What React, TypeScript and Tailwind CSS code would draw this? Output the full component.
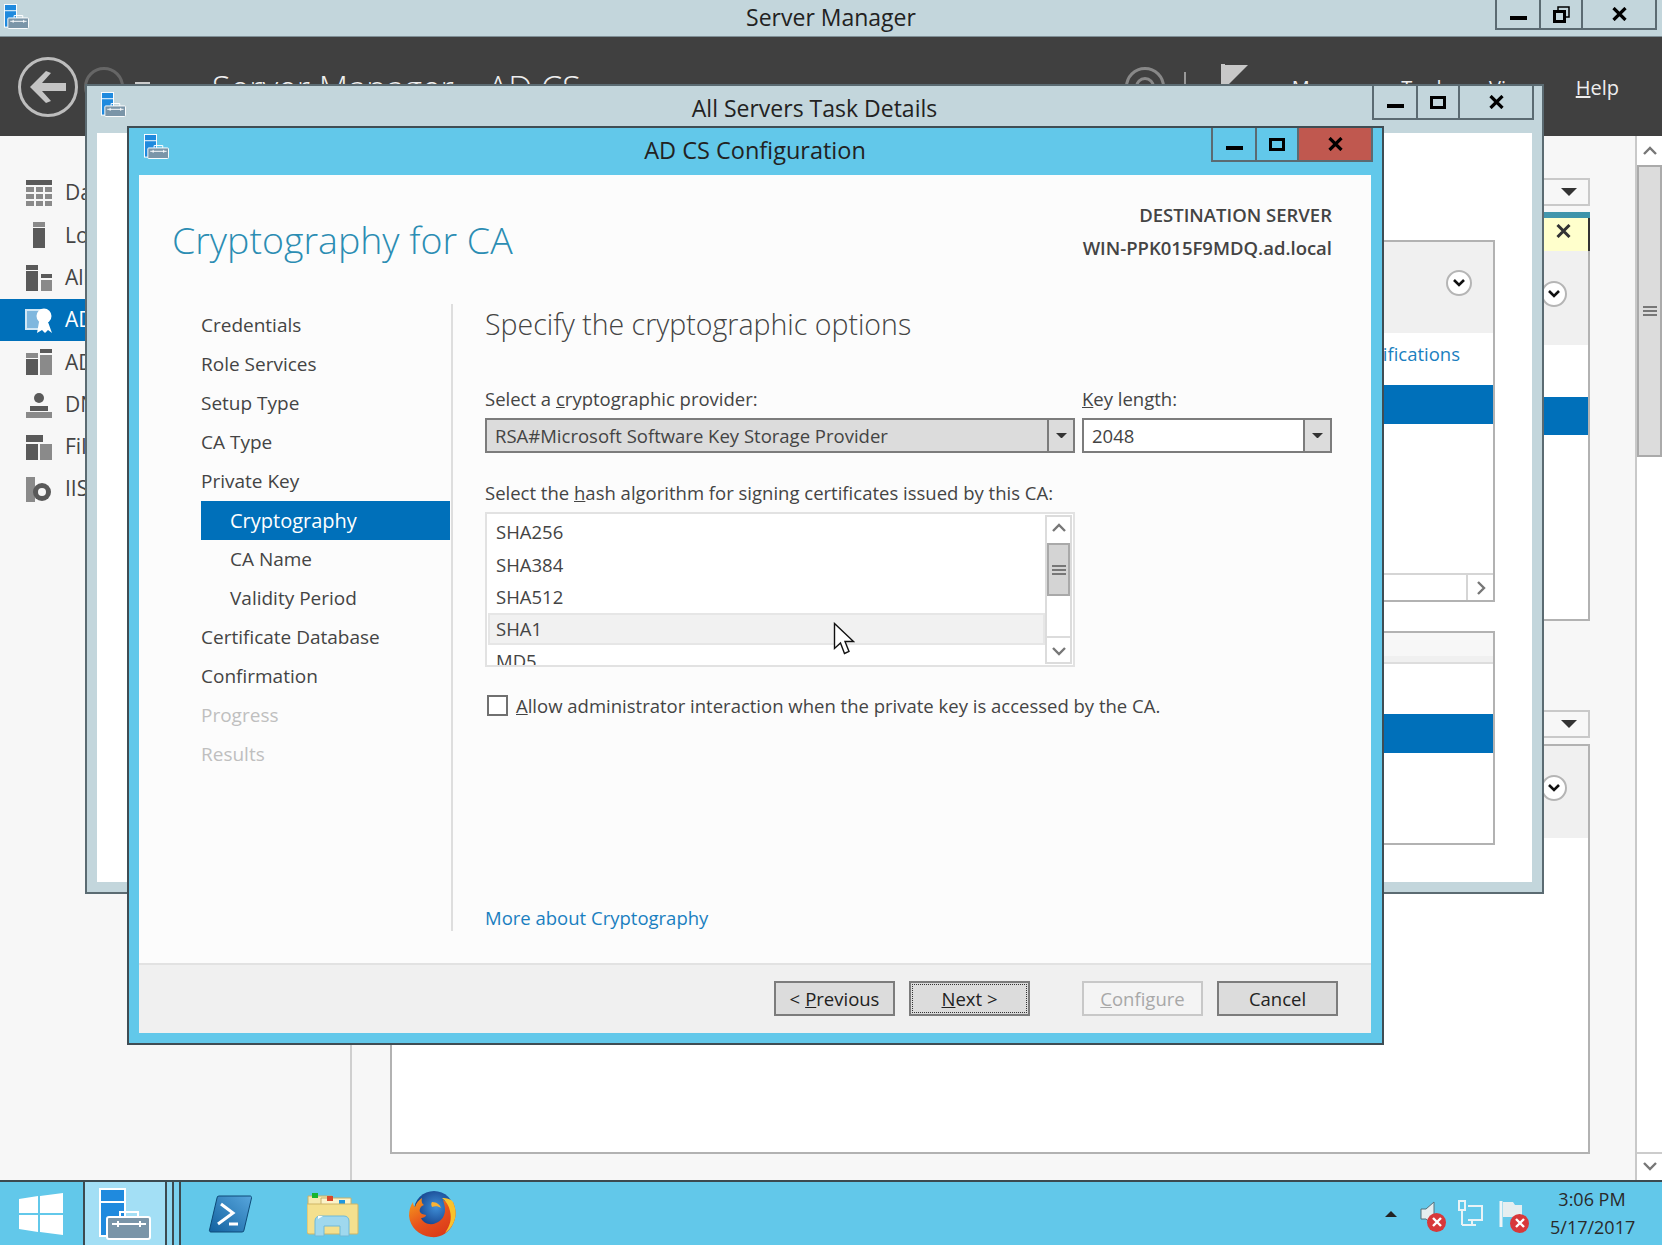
const steps = [
  { label: 'Credentials' },
  { label: 'Role Services' },
  { label: 'Setup Type' },
  { label: 'CA Type' },
  { label: 'Private Key' },
  { label: 'Cryptography', sub: true, active: true },
  { label: 'CA Name', sub: true },
  { label: 'Validity Period', sub: true },
  { label: 'Certificate Database' },
  { label: 'Confirmation' },
  { label: 'Progress', off: true },
  { label: 'Results', off: true },
]

const navLabels = ['Dashboard', 'Local Server', 'All Servers', 'AD CS', 'AD DS', 'DNS', 'File and Storage', 'IIS']

const ToolIcon = ({ size }: { size: number }) => (
  <svg width={size} height={size} viewBox="0 0 52 52">
    <rect x="0" y="0" width="27" height="49" fill="#fff" />
    <rect x="2" y="2" width="23" height="11" fill="#1f8ade" />
    <rect x="2" y="15" width="23" height="32" fill="#1f8ade" />
    <path d="M21 29v-5h18v5" fill="none" stroke="#fff" strokeWidth="2" />
    <rect x="8" y="29" width="43" height="22" rx="2" fill="#7a95a8" stroke="#fff" strokeWidth="2" />
    <path d="M13 36h34M19 33v6M41 33v6" stroke="#fff" strokeWidth="2" />
  </svg>
)

const MinGlyph = () => <span className="mt-[8px] block h-[4px] w-[17px] bg-black" />

const MaxGlyph = () => <span className="block h-[13px] w-[16px] border-[3px] border-black" />

const RestoreGlyph = () => (
  <svg width="17" height="17" viewBox="0 0 17 17" fill="none" stroke="#000">
    <path d="M5 4V1h11v10h-3" strokeWidth="1.5" />
    <rect x="1.5" y="5.5" width="10" height="10" strokeWidth="3" />
  </svg>
)

const CloseGlyph = () => (
  <svg width="15" height="14" viewBox="0 0 15 14">
    <path d="M1.5 1L13.5 13M13.5 1L1.5 13" stroke="#000" strokeWidth="3.2" />
  </svg>
)

const CaptionButtons = ({ max, red, h }: { max: React.ReactNode; red?: boolean; h: string }) => (
  <div className={`flex border-2 border-t-0 border-[#5b6b72] ${h}`}>
    <div className="flex w-[44px] items-center justify-center border-r-2 border-[#5b6b72]"><MinGlyph /></div>
    <div className="flex w-[42px] items-center justify-center border-r-2 border-[#5b6b72]">{max}</div>
    <div className={`flex w-[72px] items-center justify-center ${red ? 'bg-[#c0584f]' : ''}`}><CloseGlyph /></div>
  </div>
)

const Chevron = ({ dir = 'up', tone = '#777' }: { dir?: 'up' | 'down' | 'right'; tone?: string }) => {
  const d = dir === 'up' ? 'M2 9l6-6 6 6' : dir === 'down' ? 'M2 4l6 6 6-6' : 'M5 2l6 6-6 6'
  return (
    <svg width="16" height="16" viewBox="0 0 16 16" fill="none">
      <path d={d} stroke={tone} strokeWidth="2.4" />
    </svg>
  )
}

const Caret = ({ w = 16, up }: { w?: number; up?: boolean }) => (
  <svg width={w} height={w / 2} viewBox="0 0 16 8">
    <path d={up ? 'M0 8h16L8 0z' : 'M0 0h16L8 8z'} fill={up ? '#222' : '#333'} />
  </svg>
)

const RoundChevron = () => (
  <span className="flex h-[26px] w-[26px] items-center justify-center rounded-full border-2 border-[#b5b5b5] bg-white">
    <svg width="14" height="10" viewBox="0 0 14 10" fill="none">
      <path d="M2 2l5 5 5-5" stroke="#111" strokeWidth="2.6" />
    </svg>
  </span>
)

const Grip = () => (
  <span className="flex w-[14px] flex-col gap-[2px]">
    <span className="h-[2px] bg-[#777]" />
    <span className="h-[2px] bg-[#777]" />
    <span className="h-[2px] bg-[#777]" />
  </span>
)

const Combo = ({ w, text, gray, divider }: { w: string; text: string; gray?: boolean; divider: string }) => (
  <div className={`flex h-[35px] border-2 border-[#7c7c7c] ${w} ${gray ? 'bg-[#dcdcdc]' : 'bg-white'}`}>
    <div className="flex flex-1 items-center pl-[8px] pt-[1px] leading-none">{text}</div>
    <div className={`flex items-center justify-center border-l-2 border-[#7c7c7c] bg-[#dcdcdc] ${divider}`}><Caret w={11} /></div>
  </div>
)

const Btn = ({ children, className = '' }: { children: React.ReactNode; className?: string }) => (
  <div className={`flex h-[35px] w-[121px] items-center justify-center border-2 border-[#7c7c7c] bg-[#dcdcdc] text-[#222] ${className}`}>
    {children}
  </div>
)

const NavIcon = ({ i }: { i: number }) => {
  const tone = i === 3 ? '#cfe6f5' : '#5a5a5a'
  const c = i === 3 ? '#ffffff' : '#8a8a8a'
  return (
    <svg width="28" height="28" viewBox="0 0 28 28">
      {i === 0 && (
        <>
          <rect x="1" y="1" width="26" height="5" fill={tone} />
          <path d="M1 8h8v5H1zM11 8h7v5h-7zM20 8h7v5h-7zM1 15h8v5H1zM11 15h7v5h-7zM20 15h7v5h-7zM1 22h8v5H1zM11 22h7v5h-7zM20 22h7v5h-7z" fill={c} />
        </>
      )}
      {i === 1 && (
        <>
          <rect x="8" y="1" width="12" height="5" fill={c} />
          <rect x="8" y="7" width="12" height="20" fill={tone} />
        </>
      )}
      {i === 2 && (
        <>
          <rect x="1" y="1" width="12" height="5" fill={tone} />
          <rect x="1" y="7" width="12" height="20" fill={tone} />
          <rect x="16" y="10" width="11" height="4" fill={tone} />
          <rect x="16" y="16" width="11" height="11" fill={c} />
        </>
      )}
      {i === 3 && (
        <>
          <rect x="1" y="4" width="15" height="19" fill="#7fb7de" stroke="#cfe6f5" strokeWidth="2" />
          <circle cx="19" cy="10" r="7.5" fill="#fff" />
          <path d="M14 16l-2 11 5-3 3 3 3-3 4 3-4-11z" fill="#fff" />
        </>
      )}
      {i === 4 && (
        <>
          <rect x="1" y="5" width="12" height="5" fill={c} />
          <rect x="1" y="11" width="12" height="16" fill={tone} />
          <rect x="15" y="1" width="12" height="4" fill={tone} />
          <rect x="15" y="7" width="12" height="20" fill={c} />
        </>
      )}
      {i === 5 && (
        <>
          <circle cx="14" cy="7" r="5" fill={tone} />
          <path d="M5 20v-5h18v5z" fill={tone} />
          <rect x="1" y="21" width="26" height="6" fill={c} />
        </>
      )}
      {i === 6 && (
        <>
          <rect x="1" y="2" width="17" height="7" fill={tone} />
          <rect x="1" y="11" width="12" height="16" fill={tone} />
          <rect x="15" y="11" width="12" height="16" fill={c} />
        </>
      )}
      {i === 7 && (
        <>
          <rect x="1" y="2" width="9" height="25" fill={c} />
          <circle cx="17" cy="17" r="9" fill={tone} />
          <circle cx="17" cy="17" r="4" fill="#f7f7f7" />
        </>
      )}
    </svg>
  )
}

const Tile = ({ className = '', head, blue }: { className?: string; head: string; blue: string }) => (
  <div className={`flex flex-col border-2 border-[#b2b2b2] bg-white ${className}`}>
    <div className={`flex shrink-0 justify-end bg-[#f0f0f0] pr-[21px] ${head}`}>
      <RoundChevron />
    </div>
    <div className={`w-full bg-[#0070ba] ${blue}`} />
  </div>
)

const Dropdown = ({ className = '' }: { className?: string }) => (
  <div className={`ml-auto flex h-[28px] w-[300px] items-center justify-end border-2 border-[#c9c9c9] bg-[#f7f7f7] pr-[11px] ${className}`}>
    <Caret />
  </div>
)

const Firefox = () => (
  <svg width="50" height="50" viewBox="0 0 50 50">
    <defs>
      <radialGradient id="ffGlobe" cx="55%" cy="40%" r="55%">
        <stop offset="0%" stopColor="#3f8fd8" />
        <stop offset="100%" stopColor="#123c86" />
      </radialGradient>
      <linearGradient id="ffFox" x1="0" y1="0" x2="0.7" y2="1">
        <stop offset="0%" stopColor="#f6a11d" />
        <stop offset="55%" stopColor="#e8531c" />
        <stop offset="100%" stopColor="#d9391a" />
      </linearGradient>
    </defs>
    <circle cx="26" cy="22" r="20" fill="url(#ffGlobe)" />
    <path d="M45 13c3 7 4 14 0 22-4 9-13 14-22 13C11 47 2 38 1 27c0-5 1-10 4-14 0 3 1 4 2 5 1-4 4-7 7-9-1 3 0 6 2 7-3 1-5 4-4 7 1 2 3 2 6 3 0 2-3 3-5 3 2 5 9 8 15 5 6-2 9-8 9-13 0-4-1-7-2-10 2 1 4 2 6 4 0-1 1-2 4-2z" fill="url(#ffFox)" />
    <path d="M45 13c3 7 4 14 0 22-2 4-5 7-8 9 5-7 7-14 5-22-1-5-4-10-8-13 5 0 9 1 11 4z" fill="#f9c22c" />
    <path d="M24 13c5 0 8 3 9 6-3-2-6-2-9-1-1-2-1-4 0-5z" fill="#f9b233" />
  </svg>
)

const FolderIcon = () => (
  <svg width="52" height="48" viewBox="0 0 52 48">
    <path d="M1 6h24v10H1z" fill="#f6e9ae" stroke="#c8b06a" />
    <rect x="5" y="3" width="6" height="5" fill="#18b52e" />
    <path d="M14 8h30v9H14z" fill="#fbf3c9" stroke="#c8b06a" />
    <rect x="20" y="6" width="6" height="5" fill="#d9472b" />
    <rect x="32" y="10" width="6" height="5" fill="#1d97e0" />
    <path d="M0 14h50a1 1 0 0 1 1 1v28a1 1 0 0 1-1 1H2a2 2 0 0 1-2-2z" fill="#f4e08e" stroke="#cfb566" />
    <path d="M8 46V31c0-3 2-5 5-5h24c3 0 5 2 5 5v15h-9V36H17v10z" fill="#9fd8ee" stroke="#6fb9d8" />
    <path d="M11 29l5-3h-5z" fill="#fff" />
  </svg>
)

const PowerShell = () => (
  <svg width="44" height="38" viewBox="0 0 44 38">
    <defs>
      <linearGradient id="psFill" x1="0" y1="1" x2="1" y2="0">
        <stop offset="0%" stopColor="#12619f" />
        <stop offset="100%" stopColor="#57a6dd" />
      </linearGradient>
    </defs>
    <path d="M11 1h31a1.500 1.500 0 0 1 1.500 2L36 35a2 2 0 0 1-2 2H3a1.500 1.500 0 0 1-1.500-2L9 3a2 2 0 0 1 2-2z" fill="url(#psFill)" stroke="#0e4a78" />
    <path d="M13 9l12 9-15 11" fill="none" stroke="#fff" strokeWidth="3" />
    <path d="M21 29h9" stroke="#fff" strokeWidth="3" />
  </svg>
)

const TrayX = () => (
  <span className="absolute -bottom-[5px] -right-[6px] flex h-[19px] w-[19px] items-center justify-center rounded-full bg-[#d8383a]">
    <svg width="10" height="10" viewBox="0 0 10 10">
      <path d="M1 1l8 8M9 1L1 9" stroke="#fff" strokeWidth="2.4" />
    </svg>
  </span>
)

export default function App() {
  return (
    <div className="relative flex h-[1245px] w-[1662px] flex-col overflow-hidden bg-[#f7f7f7] font-['Open_Sans','Noto_Sans',sans-serif] text-[18.5px] text-[#444]">
      {/* server manager behind everything */}
      <div className="grid h-[37px] shrink-0 grid-cols-[1fr_auto_1fr] border-b border-[#7f8f96] bg-[#c3d6dc]">
        <div className="pl-[4px] pt-[4px]"><ToolIcon size={25} /></div>
        <div className="pt-[3px] text-[23px] leading-[28px] text-[#222]">Server Manager</div>
        <div className="flex justify-end pr-[5px]"><CaptionButtons max={<RestoreGlyph />} h="h-[30px]" /></div>
      </div>

      <div className="flex h-[99px] shrink-0 items-center bg-[#404040] pl-[18px] pr-[43px]">
        <span className="flex h-[60px] w-[60px] items-center justify-center rounded-full border-[3px] border-[#bdbdbd]">
          <svg width="40" height="34" viewBox="0 0 40 34"><path d="M18 1L2 17l16 16 5-2-9-10h24v-8H14l9-10z" fill="#c4c4c4" /></svg>
        </span>
        <span className="ml-[6px] h-[40px] w-[40px] rounded-full border-[3px] border-[#666]" />
        <span className="mb-[8px] ml-[11px] h-[2px] w-[15px] bg-[#ccc]" />
        <span className="ml-[62px] pt-[3px] text-[34px] font-light leading-none text-[#eee]">Server Manager</span>
        <span className="ml-[34px] pt-[3px] text-[34px] font-light leading-none text-[#eee]">AD CS</span>
        <div className="ml-auto flex items-center text-[20px] text-[#eee]">
          <span className="flex h-[40px] w-[40px] items-center justify-center rounded-full border-[3px] border-[#888]">
            <span className="h-[20px] w-[20px] rounded-full border-[3px] border-[#888]" />
          </span>
          <span className="ml-[19px] h-[30px] w-[2px] bg-[#999]" />
          <svg className="mb-[8px] ml-[34px]" width="28" height="38" viewBox="0 0 28 38"><path d="M1 0h4v38H1zM5 1h23L5 24z" fill="#c8c8c8" /></svg>
          <span className="ml-[44px] pt-[2px]">Manage</span>
          <span className="ml-[35px] pt-[2px]">Tools</span>
          <span className="ml-[38px] pt-[2px]">View</span>
          <span className="ml-[43px] pt-[2px]"><u>H</u>elp</span>
        </div>
      </div>

      <div className="flex min-h-0 flex-1">
        <div className="w-[352px] shrink-0 border-r-2 border-[#cfcfcf] pt-[36px] text-[21px]">
          {navLabels.map((n, i) => (
            <div key={n} className={`flex h-[42.300px] items-center gap-[12px] overflow-hidden whitespace-nowrap pl-[25px] ${i === 3 ? 'bg-[#0070ba] text-white' : ''}`}>
              <NavIcon i={i} />
              <span>{n}</span>
            </div>
          ))}
        </div>

        <div className="flex min-w-0 flex-1 flex-col pb-[26px] pl-[38px] pr-[45px] pt-[42px]">
          <Dropdown />
          <div className="mt-[6px] h-[6px] bg-gradient-to-r from-[#c8dfe6] to-[#3c93aa]" />
          <div className="flex h-[33px] items-center justify-end border-r-2 border-[#333] bg-[#ffffcc] pb-[7px] pr-[17px]">
            <svg width="15" height="14" viewBox="0 0 15 14"><path d="M1.500 1L13.500 13M13.500 1L1.500 13" stroke="#333" strokeWidth="3" /></svg>
          </div>
          <Tile className="h-[370px] border-t-0" head="h-[94px] pt-[30px]" blue="mt-[52px] h-[38px]" />
          <Dropdown className="mt-[89px]" />
          <Tile className="mt-[6px] flex-1" head="h-[92px] pt-[29px]" blue="hidden" />
        </div>

        <div className="flex w-[27px] shrink-0 flex-col border-l-2 border-[#c9c9c9] bg-white">
          <div className="flex h-[29px] items-center justify-center pt-[5px]"><Chevron /></div>
          <div className="flex h-[292px] items-center justify-center border-2 border-[#aaa] bg-[#dcdcdc]"><Grip /></div>
          <div className="flex-1" />
          <div className="flex h-[28px] items-center justify-center border-t-2 border-[#ccc]"><Chevron dir="down" /></div>
        </div>
      </div>

      <div className="flex h-[65px] shrink-0 items-center border-t-2 border-[#3c4a50] bg-[#62c8ea] pr-[28px]">
        <div className="flex h-full w-[83px] items-center pl-[19px]">
          <svg width="44" height="42" viewBox="0 0 44 42">
            <path d="M0 6l19-3v17H0zM21 3l23-3v20H21zM0 22h19v17L0 36zM21 22h23v20l-23-3z" fill="#fff" />
          </svg>
        </div>
        <div className="flex h-full w-[84px] items-center justify-center border-x-2 border-[#3c4a50] bg-[#a3dff5]"><ToolIcon size={52} /></div>
        <div className="h-full w-[7px] border-r-2 border-[#3c4a50] bg-[#8ed6f0]" />
        <div className="h-full w-[7px] border-r-2 border-[#3c4a50] bg-[#7ad0ee]" />
        <div className="ml-[27px] flex items-center"><PowerShell /></div>
        <div className="ml-[55px] flex items-center"><FolderIcon /></div>
        <div className="ml-[49px] flex items-center"><Firefox /></div>
        <div className="ml-auto flex items-center">
          <Caret w={12} up />
          <span className="relative ml-[23px]">
            <svg width="20" height="26" viewBox="0 0 20 26"><path d="M1 8h5l8-7v24l-8-7H1z" fill="#e6eef0" stroke="#55707b" /></svg>
            <TrayX />
          </span>
          <svg className="ml-[18px]" width="26" height="28" viewBox="0 0 26 28" fill="none" stroke="#e9f3f6" strokeWidth="2">
            <rect x="1" y="1" width="6" height="9" fill="#62c8ea" />
            <path d="M4 10v15M10 6h14v14H10M4 25h14M14 20v5" />
          </svg>
          <span className="relative ml-[15px]">
            <svg width="24" height="28" viewBox="0 0 24 28"><path d="M2 1v26" stroke="#eef5f7" strokeWidth="3" /><path d="M4 2h10l2 3h7v12H4z" fill="#e6eef0" /></svg>
            <TrayX />
          </span>
          <div className="ml-[27px] w-[84px] pb-[2px] text-center text-[18px] leading-[28px] text-[#2a2a2a]">
            <div>3:06 PM</div>
            <div>5/17/2017</div>
          </div>
        </div>
      </div>

      {/* all servers task details window */}
      <div className="absolute left-[85px] top-[84px] flex h-[810px] w-[1459px] flex-col border-2 border-[#5b6b72] bg-[#c3d6dc] px-[10px] pb-[10px]">
        <div className="grid h-[47px] shrink-0 grid-cols-[1fr_auto_1fr]">
          <div className="pl-[4px] pt-[6px]"><ToolIcon size={25} /></div>
          <div className="pt-[2px] text-[23px] leading-[40px] text-[#222]">All Servers Task Details</div>
          <div className="-mr-[2px] flex justify-end"><CaptionButtons max={<MaxGlyph />} h="h-[34px]" /></div>
        </div>
        <div className="flex flex-1 flex-col items-end bg-white pr-[37px] pt-[107px]">
          <div className="flex h-[362px] w-[1000px] flex-col border-2 border-[#b2b2b2]">
            <div className="flex h-[91px] shrink-0 justify-end bg-[#f0f0f0] pr-[21px] pt-[28px]"><RoundChevron /></div>
            <div className="pr-[33px] pt-[9px] text-right leading-[24px] text-[#1a7fc0]">Notifications</div>
            <div className="mt-[19px] h-[39px] bg-[#0070ba]" />
            <div className="mt-auto flex h-[27px] justify-end border-t-2 border-[#d5d5d5]">
              <div className="flex w-[27px] items-center justify-center border-l-2 border-[#d5d5d5]"><Chevron dir="right" /></div>
            </div>
          </div>
          <div className="mt-[29px] flex h-[214px] w-[1000px] flex-col border-2 border-[#b2b2b2]">
            <div className="h-[23px] bg-[#f7f7f7]" />
            <div className="h-[8px] border-b-2 border-[#ddd] bg-[#f0f0f0]" />
            <div className="mt-[50px] h-[39px] bg-[#0070ba]" />
          </div>
        </div>
      </div>

      {/* wizard */}
      <div className="absolute left-[127px] top-[126px] flex h-[919px] w-[1257px] flex-col border-2 border-[#3f4d54] bg-[#62c8ea] pb-[10px] pl-[10px] pr-[11px]">
        <div className="grid h-[47px] shrink-0 grid-cols-[1fr_auto_1fr]">
          <div className="pl-[5px] pt-[6px]"><ToolIcon size={25} /></div>
          <div className="pt-[2px] text-[23.500px] leading-[40px] text-[#222]">AD CS Configuration</div>
          <div className="-mr-[2px] flex justify-end"><CaptionButtons max={<MaxGlyph />} red h="h-[34px]" /></div>
        </div>

        <div className="flex min-h-0 flex-1 flex-col bg-[#fcfcfc]">
          <div className="flex h-[129px] shrink-0 justify-between pl-[33px] pr-[39px]">
            <div className="pt-[40px] text-[37.500px] font-light leading-[50px] text-[#2b8db3]">Cryptography for CA</div>
            <div className="pt-[23px] text-right font-semibold leading-[33px]">
              <div>DESTINATION SERVER</div>
              <div>WIN-PPK015F9MDQ.ad.local</div>
            </div>
          </div>

          <div className="flex h-[627px] shrink-0">
            <div className="w-[314px] shrink-0 border-r-2 border-[#dedede] pl-[62px] pr-[1px] pt-[2px] text-[19px]">
              {steps.map((s) => (
                <div
                  key={s.label}
                  className={`flex h-[39px] items-center ${s.sub ? 'pl-[29px]' : ''} ${s.active ? 'bg-[#0070ba] text-[20px] text-white' : ''} ${s.off ? 'text-[#bfbfbf]' : ''}`}
                >
                  {s.label}
                </div>
              ))}
            </div>

            <div className="flex flex-1 flex-col pl-[32px]">
              <div className="h-[40px] text-[28.500px] font-light leading-[40px]">Specify the cryptographic options</div>
              <div className="mt-[43px] flex h-[24px] gap-[7px] leading-[24px]">
                <div className="w-[590px]">Select a <u>c</u>ryptographic provider:</div>
                <div><u>K</u>ey length:</div>
              </div>
              <div className="mt-[7px] flex gap-[7px]">
                <Combo w="w-[590px]" text="RSA#Microsoft Software Key Storage Provider" gray divider="w-[26px]" />
                <Combo w="w-[250px]" text="2048" divider="w-[27px]" />
              </div>
              <div className="mt-[28px] h-[24px] leading-[24px]">Select the <u>h</u>ash algorithm for signing certificates issued by this CA:</div>
              <div className="mt-[7px] flex h-[155px] w-[590px] overflow-hidden border-2 border-[#e2e2e2] bg-white">
                <div className="min-w-0 flex-1 pl-[1px] pt-[2px]">
                  {['SHA256', 'SHA384', 'SHA512', 'SHA1', 'MD5'].map((a) => (
                    <div
                      key={a}
                      className={`flex h-[32.300px] items-center ${a === 'SHA1' ? 'border-2 border-[#e6e6e6] bg-[#f1f1f1] pl-[6px]' : 'pl-[8px]'}`}
                    >
                      {a}
                    </div>
                  ))}
                </div>
                <div className="my-px mr-px flex w-[27px] shrink-0 flex-col border-2 border-[#dcdcdc]">
                  <div className="flex h-[26px] items-center justify-center"><Chevron /></div>
                  <div className="flex h-[53px] items-center justify-center border-2 border-[#a9a9a9] bg-[#d4d4d4]"><Grip /></div>
                  <div className="flex-1" />
                  <div className="flex h-[26px] items-center justify-center border-t-2 border-[#dcdcdc] pt-[3px]"><Chevron dir="down" /></div>
                </div>
              </div>
              <div className="mt-[28px] flex h-[21px] items-center gap-[8px]">
                <span className="ml-[2px] h-[21px] w-[21px] border-2 border-[#707070] bg-white" />
                <span><u>A</u>llow administrator interaction when the private key is accessed by the CA.</span>
              </div>
              <div className="mb-px mt-auto h-[24px] leading-[24px] text-[#1a7fc0]">More about Cryptography</div>
            </div>
          </div>

          <div className="mt-auto flex h-[70px] shrink-0 justify-end border-t-2 border-[#e2e2e2] bg-[#f0f0f0] pr-[33px] pt-[16px]">
            <Btn>&lt; <u className="ml-[5px]">P</u>revious</Btn>
            <Btn className="ml-[14px] outline-1 -outline-offset-4 outline-dotted outline-[#333]"><u>N</u>ext &gt;</Btn>
            <Btn className="ml-[52px] border-[#c8c8c8] bg-[#f4f4f4] text-[#a8a8a8]"><u>C</u>onfigure</Btn>
            <Btn className="ml-[14px]">Cancel</Btn>
          </div>
        </div>
      </div>

      {/* mouse pointer over the list */}
      <svg className="absolute left-[833px] top-[622px]" width="22" height="36" viewBox="0 0 22 36">
        <path d="M1.500 1.500v25l6-5.500 4 10.500 4.500-2-4-10h8.500z" fill="#fff" stroke="#111" strokeWidth="1.400" />
      </svg>
    </div>
  )
}
